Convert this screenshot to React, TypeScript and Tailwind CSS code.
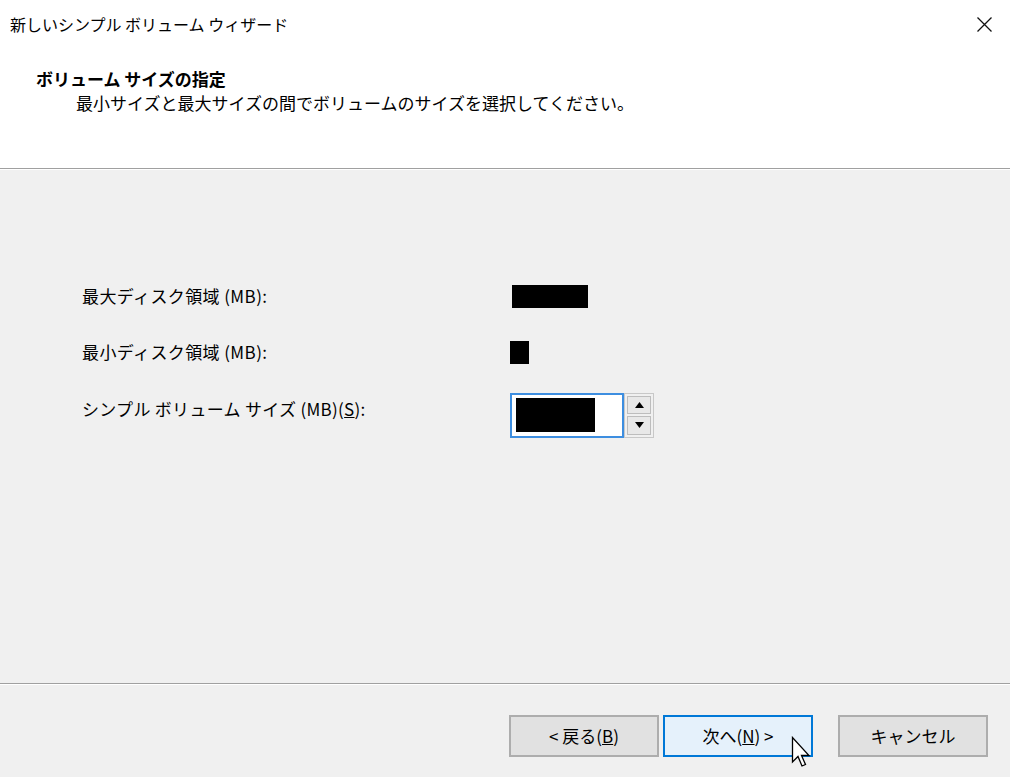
import React from "react";

const font = { fontFamily: '"Noto Sans CJK JP", "Noto Sans", sans-serif' };

const Cursor = () => (
  <svg
    className="absolute left-[791px] top-[736px]"
    width="22"
    height="36"
    viewBox="0 0 22 36"
  >
    <path
      d="M1.5 1.5 L1.5 26 L7 20.5 L11 30 L14.5 28.5 L10.5 19.5 L18 19.5 Z"
      fill="#fff"
      stroke="#000"
      strokeWidth="1.3"
      strokeLinejoin="miter"
    />
  </svg>
);

export default function App() {
  return (
    <div
      className="relative flex h-[777px] w-[1010px] flex-col overflow-hidden bg-[#f0f0f0] text-[17px] text-black"
      style={font}
    >
      {/* header */}
      <div className="h-[168px] bg-white">
        <div className="flex h-[48px] items-center justify-between pl-[10px] pr-[18px]">
          <span className="text-[16px] leading-none">新しいシンプル ボリューム ウィザード</span>
          <svg width="15" height="15" viewBox="0 0 15 15">
            <path d="M0.5 0.5 L14.5 14.5 M14.5 0.5 L0.5 14.5" stroke="#111" strokeWidth="1.3" />
          </svg>
        </div>
        <div className="pl-[36px] pt-[20px] font-bold leading-[22px]">
          ボリューム サイズの指定
        </div>
        <div className="pl-[76px] leading-[26px]">
          最小サイズと最大サイズの間でボリュームのサイズを選択してください。
        </div>
      </div>
      <div className="h-px bg-[#a0a0a0]" />
      <div className="h-px bg-white" />

      {/* body */}
      <div className="flex-1 pl-[82px] pt-[98px]">
        <div className="grid grid-cols-[428px_auto] items-center">
          <div className="flex h-[56px] items-center tracking-[0.4px]">最大ディスク領域 (MB):</div>
          <div className="flex h-[56px] items-center pl-[2px]">
            <div className="h-[23px] w-[76px] bg-black" />
          </div>
          <div className="flex h-[56px] items-center tracking-[0.4px]">最小ディスク領域 (MB):</div>
          <div className="flex h-[56px] items-center">
            <div className="h-[23px] w-[19px] bg-black" />
          </div>
          <div className="flex h-[58px] items-center tracking-[0.3px]">
            シンプル ボリューム サイズ (MB)(<span className="underline">S</span>):
          </div>
          <div className="flex h-[58px] items-center pt-[12px]">
            <div className="flex h-[45px] w-[114px] items-center border-2 border-[#3d8ee0] bg-white pl-[4px]">
              <div className="h-[34px] w-[79px] bg-black" />
            </div>
            <div className="flex h-[45px] w-[30px] flex-col gap-[2px] border border-[#c8c8c8] bg-[#f0f0f0] p-[2px]">
              <div className="flex flex-1 items-center justify-center border border-[#bdbdbd] bg-[#e8e8e8]">
                <svg width="9" height="6" viewBox="0 0 9 6">
                  <path d="M4.5 0 L9 6 L0 6 Z" fill="#000" />
                </svg>
              </div>
              <div className="flex flex-1 items-center justify-center border border-[#bdbdbd] bg-[#e8e8e8]">
                <svg width="9" height="6" viewBox="0 0 9 6">
                  <path d="M0 0 L9 0 L4.5 6 Z" fill="#000" />
                </svg>
              </div>
            </div>
          </div>
        </div>
      </div>

      {/* footer */}
      <div className="h-px bg-[#a0a0a0]" />
      <div className="h-px bg-white" />
      <div className="flex h-[92px] items-start pl-[509px] pt-[30px]">
        <button className="h-[42px] w-[150px] border-2 border-[#adadad] bg-[#e1e1e1] text-[17px]">
          &lt; 戻る(<span className="underline">B</span>)
        </button>
        <button className="ml-[4px] h-[42px] w-[150px] border-2 border-[#0078d7] bg-[#e5f1fb] text-[17px]">
          次へ(<span className="underline">N</span>) &gt;
        </button>
        <button className="ml-[25px] h-[42px] w-[150px] border-2 border-[#adadad] bg-[#e1e1e1] text-[17px]">
          キャンセル
        </button>
      </div>

      <Cursor />
    </div>
  );
}
